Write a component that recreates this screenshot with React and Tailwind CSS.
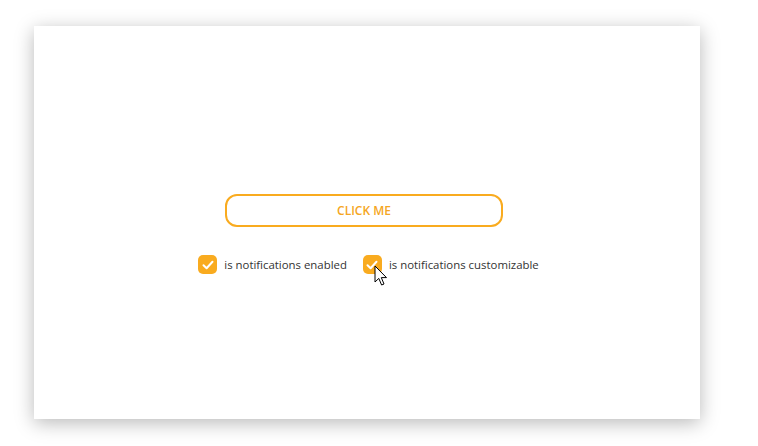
import React from "react";

function Check() {
  return (
    <span className="flex h-[19px] w-[19px] items-center justify-center rounded-[5px] bg-[#f9ab1f]">
      <svg width="12" height="10" viewBox="0 0 12 10" fill="none">
        <path d="M1.5 5.2 L4.6 8.2 L10.5 1.8" stroke="white" strokeWidth="2" strokeLinecap="round" strokeLinejoin="round" />
      </svg>
    </span>
  );
}

export default function App() {
  return (
    <div className="h-[446px] w-[758px] bg-white" style={{ fontFamily: "'Open Sans', 'Noto Sans', sans-serif" }}>
      <div className="pl-[34px] pt-[26px]">
        <div className="relative flex h-[393px] w-[666px] flex-col items-center bg-white shadow-[0_4px_18px_rgba(0,0,0,0.28)]">
          <div className="mt-[168px] ml-[-6px] flex h-[33px] w-[278px] items-center justify-center rounded-[12px] border-2 border-[#f9ab1f] text-[12px] font-semibold text-[#f5a623]">
            CLICK ME
          </div>
          <div className="mt-[28px] ml-[3px] flex items-center text-[11.4px] text-[#333]">
            <div className="flex items-center gap-[7px]">
              <Check />
              <span>is notifications enabled</span>
            </div>
            <div className="ml-[16px] flex items-center gap-[7px]">
              <Check />
              <span>is notifications customizable</span>
            </div>
          </div>
          <svg className="absolute left-[340px] top-[239px]" width="14" height="22" viewBox="0 0 14 22">
            <path d="M1 1 L1 17 L4.8 13.4 L7.6 20 L10 19 L7.3 12.6 L12.5 12.6 Z" fill="white" stroke="black" strokeWidth="1" strokeLinejoin="round" />
          </svg>
        </div>
      </div>
    </div>
  );
}
